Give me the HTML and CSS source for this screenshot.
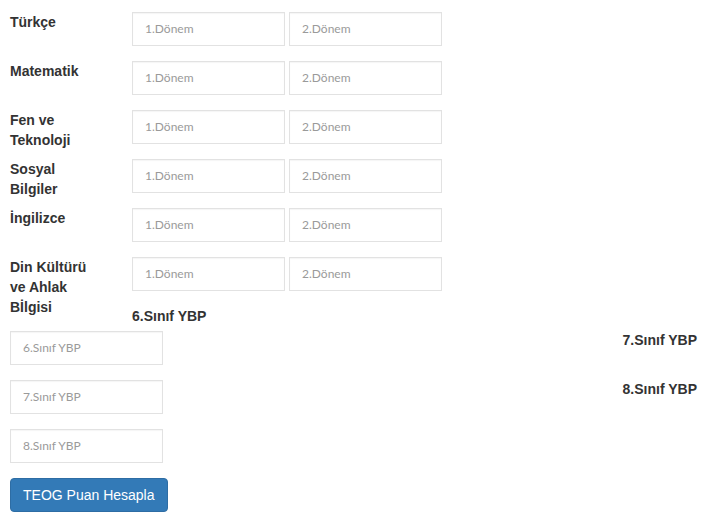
FILE: index.html
```html
<!DOCTYPE html>
<html lang="tr">
<head>
    <meta charset="UTF-8">
    <title>TEOG Puan Hesaplama</title>
    <link rel="stylesheet" href="styles.css">
</head>
<body>
    <form id="teog-form">
        <div class="subjects">
            <div class="row">
                <label>Türkçe</label>
                <input type="text" class="field" placeholder="1.Dönem">
                <input type="text" class="field" placeholder="2.Dönem">
            </div>
            <div class="row">
                <label>Matematik</label>
                <input type="text" class="field" placeholder="1.Dönem">
                <input type="text" class="field" placeholder="2.Dönem">
            </div>
            <div class="row">
                <label>Fen ve Teknoloji</label>
                <input type="text" class="field" placeholder="1.Dönem">
                <input type="text" class="field" placeholder="2.Dönem">
            </div>
            <div class="row">
                <label>Sosyal Bilgiler</label>
                <input type="text" class="field" placeholder="1.Dönem">
                <input type="text" class="field" placeholder="2.Dönem">
            </div>
            <div class="row">
                <label>İngilizce</label>
                <input type="text" class="field" placeholder="1.Dönem">
                <input type="text" class="field" placeholder="2.Dönem">
            </div>
            <div class="row">
                <label>Din Kültürü ve Ahlak Bİlgisi</label>
                <input type="text" class="field" placeholder="1.Dönem">
                <input type="text" class="field" placeholder="2.Dönem">
            </div>
        </div>

        <div class="ybp-title">6.Sınıf YBP</div>
        <div class="ybp">
            <div class="ybp-row">
                <input type="text" class="field" placeholder="6.Sınıf YBP">
                <label>7.Sınıf YBP</label>
            </div>
            <div class="ybp-row">
                <input type="text" class="field" placeholder="7.Sınıf YBP">
                <label>8.Sınıf YBP</label>
            </div>
            <div class="ybp-row">
                <input type="text" class="field" placeholder="8.Sınıf YBP">
            </div>
        </div>

        <button type="button" class="btn-primary">TEOG Puan Hesapla</button>
    </form>
</body>
</html>
```

FILE: styles.css
```css
body {
    margin: 0;
    padding: 12px 27px 0 10px;
    font-family: "Liberation Sans", Arial, sans-serif;
    font-size: 14px;
    line-height: 20px;
    color: #333;
    background: #fff;
}
label {
    font-weight: bold;
}
.row {
    display: flex;
    height: 34px;
    margin-bottom: 15px;
}
.row label {
    width: 122px;
    flex-shrink: 0;
    padding-right: 40px;
    box-sizing: border-box;
}
.row .field + .field {
    margin-left: 4px;
}
.field {
    width: 153px;
    height: 34px;
    box-sizing: border-box;
    padding: 5px 12px 7px;
    border: 1px solid #e2e2e2;
    border-radius: 0;
    box-shadow: inset 0 1px 1px rgba(0, 0, 0, 0.04);
    font-family: Lato, "Open Sans", sans-serif;
    font-size: 12px;
    color: #555;
    outline: none;
}
.field::placeholder {
    color: #9a9a9a;
}
.ybp-title {
    font-weight: bold;
    padding-left: 122px;
    margin-bottom: 5px;
}
.ybp-row {
    display: flex;
    justify-content: space-between;
    align-items: flex-start;
    height: 34px;
    margin-bottom: 15px;
}
.ybp-row label {
    margin-top: -1px;
}
.btn-primary {
    padding: 6px 12px;
    height: 34px;
    border: 1px solid #2e6da4;
    border-radius: 4px;
    background: #337ab7;
    color: #fff;
    font-family: "Liberation Sans", Arial, sans-serif;
    font-size: 14px;
    line-height: 20px;
    cursor: pointer;
}
.btn-primary:hover {
    background: #286090;
}
```
